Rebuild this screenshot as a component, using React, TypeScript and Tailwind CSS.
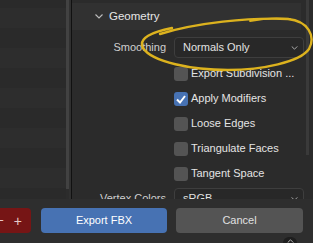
import { ReactNode } from "react";

const stripes = [8, 20, 20, 20, 20, 20, 20, 20, 20, 20, 20];

function Chevron({ cls }: { cls: string }) {
  return (
    <svg className={cls} viewBox="0 0 8 5" fill="none">
      <polyline points="0.5,0.5 4,4 7.5,0.5" stroke="#bdbdbd" strokeWidth="1.1" />
    </svg>
  );
}

function Dropdown({ label }: { label: string }) {
  return (
    <div className="w-[130px] h-[21px] rounded-[4px] border border-[#3e3e3e] bg-[#282828] flex items-center justify-between pl-[8px] pr-[5px]">
      <span className="text-[11px] text-[#e2e2e2]">{label}</span>
      <Chevron cls="w-[7px] h-[4px]" />
    </div>
  );
}

function Check({ on, label }: { on?: boolean; label: string }) {
  return (
    <div className="shrink-0 h-[25px] flex items-center pl-[102px] gap-[3px]">
      <div
        className={`w-[14px] h-[14px] rounded-[3px] flex items-center justify-center ${
          on ? "bg-[#4772b3]" : "bg-[#545454]"
        }`}
      >
        {on && (
          <svg viewBox="0 0 14 14" className="w-[14px] h-[14px]" fill="none">
            <polyline points="3,7.5 6,10.5 11,4" stroke="#ffffff" strokeWidth="2" />
          </svg>
        )}
      </div>
      <span className="text-[11px] text-[#e4e4e4] whitespace-nowrap">{label}</span>
    </div>
  );
}

function Row({ label, children }: { label: string; children: ReactNode }) {
  return (
    <div className="flex items-center gap-[8px]">
      <span className="w-[94px] text-right text-[11px] text-[#cfcfcf]">{label}</span>
      {children}
    </div>
  );
}

export default function App() {
  return (
    <div
      className="w-[313px] h-[243px] relative overflow-hidden bg-[#2c2c2c] flex flex-col"
      style={{ fontFamily: '"Liberation Sans", Arial, sans-serif' }}
    >
      <div className="h-[199px] shrink-0 flex overflow-hidden">
        {/* file list on the left */}
        <div className="w-[66px] flex flex-col">
          {stripes.map((h, i) => (
            <div
              key={i}
              className={`shrink-0 ${i % 2 == 0 ? "bg-[#2a2a2a]" : "bg-[#2d2d2d]"} ${
                h == 8 ? "h-[8px]" : "h-[20px]"
              }`}
            ></div>
          ))}
        </div>
        <div className="w-[3px] h-[189px] bg-[#424242]"></div>
        <div className="w-[2px] bg-[#303030]"></div>
        <div className="w-[1px] bg-[#111111]"></div>

        {/* properties side */}
        <div className="flex-1 relative bg-[#2b2b2b] flex flex-col">
          <div className="shrink-0 mt-[3px] mr-[12px] h-[27px] bg-[#313131] flex items-center pl-[23px] gap-[6px]">
            <Chevron cls="w-[8px] h-[5px]" />
            <span className="text-[11.5px] text-[#e6e6e6]">Geometry</span>
          </div>

          <div className="shrink-0 mt-[7px]">
            <Row label="Smoothing">
              <Dropdown label="Normals Only" />
            </Row>
          </div>

          <div className="shrink-0 mt-[3px] flex flex-col">
            <Check label="Export Subdivision ..." />
            <Check on label="Apply Modifiers" />
            <Check label="Loose Edges" />
            <Check label="Triangulate Faces" />
            <Check label="Tangent Space" />
          </div>

          <div className="shrink-0 mt-[2px]">
            <Row label="Vertex Colors">
              <Dropdown label="sRGB" />
            </Row>
          </div>

          <div className="absolute right-[4px] top-0 w-[3px] h-[155px] bg-[#3a3a3a]"></div>
        </div>
      </div>

      {/* bottom buttons */}
      <div className="flex-1 bg-[#2e2e2e] flex items-start pt-[9px]">
        <div className="ml-[-14px] w-[45px] h-[25px] rounded-[4px] bg-[#761515] flex items-center justify-end pr-[9px] gap-[10px] text-[#e6caca]">
          <span className="text-[13px] leading-none">−</span>
          <span className="text-[14px] leading-none">+</span>
        </div>
        <div className="ml-[10px] w-[126px] h-[25px] rounded-[4px] bg-[#4772b3] flex items-center justify-center text-[11px] text-white">
          Export FBX
        </div>
        <div className="ml-[9px] w-[127px] h-[25px] rounded-[4px] bg-[#545454] flex items-center justify-center text-[11px] text-[#e0e0e0]">
          Cancel
        </div>
      </div>

      {/* small collapse arrow */}
      <div className="absolute left-[283px] top-[237px] w-[14px] h-[12px] rounded-full bg-[#1e1e1e] flex justify-center pt-[2px]">
        <svg viewBox="0 0 8 5" className="w-[7px] h-[4px]" fill="none">
          <polyline points="0.5,4.5 4,1 7.5,4.5" stroke="#bdbdbd" strokeWidth="1.2" />
        </svg>
      </div>

      {/* yellow annotation */}
      <svg className="absolute inset-0 pointer-events-none" width="313" height="243" fill="none">
        <path
          d="M 160 34 C 195 23, 250 17, 288 19 C 308 21, 316 36, 309 49 C 300 62, 262 70, 228 70 C 192 70, 152 62, 143 48 C 138 38, 152 32, 172 28"
          stroke="#dcb21e"
          strokeWidth="2.4"
          strokeLinecap="round"
        />
        <path d="M 250 21 C 265 18, 280 18, 290 19" stroke="#dcb21e" strokeWidth="1.8" strokeLinecap="round" />
      </svg>
    </div>
  );
}
